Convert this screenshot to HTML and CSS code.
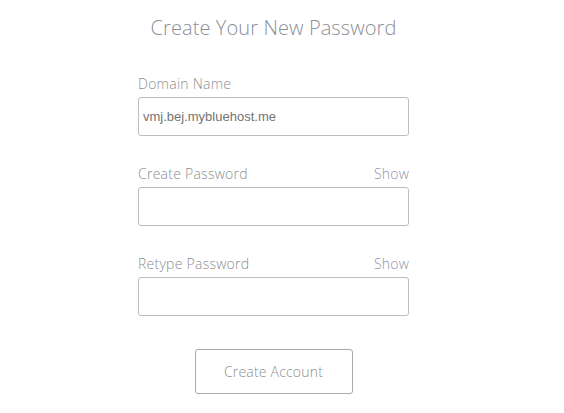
FILE: index.html
```html
<!DOCTYPE html>
<html>
<head>
<meta charset="utf-8">
<link rel="stylesheet" href="styles.css">
</head>
<body>
<div class="page">
  <form class="form">
    <h1 class="title">Create Your New Password</h1>
    <div class="field">
      <div class="label-row"><label class="label">Domain Name</label></div>
      <div class="input domain">vmj.bej.mybluehost.me</div>
    </div>
    <div class="field">
      <div class="label-row"><label class="label">Create Password</label><a class="show">Show</a></div>
      <div class="input"></div>
    </div>
    <div class="field">
      <div class="label-row"><label class="label">Retype Password</label><a class="show">Show</a></div>
      <div class="input"></div>
    </div>
    <div class="actions"><button type="button" class="btn">Create Account</button></div>
  </form>
</div>
</body>
</html>
```
FILE: styles.css
```css
html, body { margin: 0; padding: 0; background: #fff; }
body { font-family: "Open Sans", sans-serif; font-weight: 300; }
.page { width: 547px; display: flex; justify-content: center; }
.form { width: 271px; display: flex; flex-direction: column; }
.title {
  margin: 15px 0 0;
  font-size: 20px; font-weight: 300; color: #8b8f99; letter-spacing: 0.1px;
  text-align: center; line-height: 26px; white-space: nowrap;
}
.field { display: flex; flex-direction: column; }
.label-row { display: flex; justify-content: space-between; align-items: baseline; height: 20px; margin-bottom: 3px; }
.title + .field { margin-top: 33px; }
.field + .field { margin-top: 28px; }
.label { font-size: 14px; color: #8e8e8e; line-height: 20px; letter-spacing: 0.25px; }
.show { font-size: 14px; color: #9294ad; line-height: 20px; letter-spacing: 0.2px; }
.input {
  box-sizing: border-box; height: 39px; border: 1px solid #bdbdbd; border-radius: 3px;
  background: #fff;
}
.domain {
  font-family: "Liberation Sans", Arial, sans-serif; font-weight: 400; font-size: 13px;
  color: #737373; padding: 0 4px; line-height: 37px;
}
.actions { display: flex; justify-content: center; margin-top: 33px; }
.btn {
  width: 158px; height: 45px; box-sizing: border-box; background: #fff;
  border: 1px solid #a9a9a9; border-radius: 3px;
  font-family: "Open Sans", sans-serif; font-weight: 300; font-size: 14px; color: #8e8e8e;
  letter-spacing: 0.2px; padding: 0;
}
```
